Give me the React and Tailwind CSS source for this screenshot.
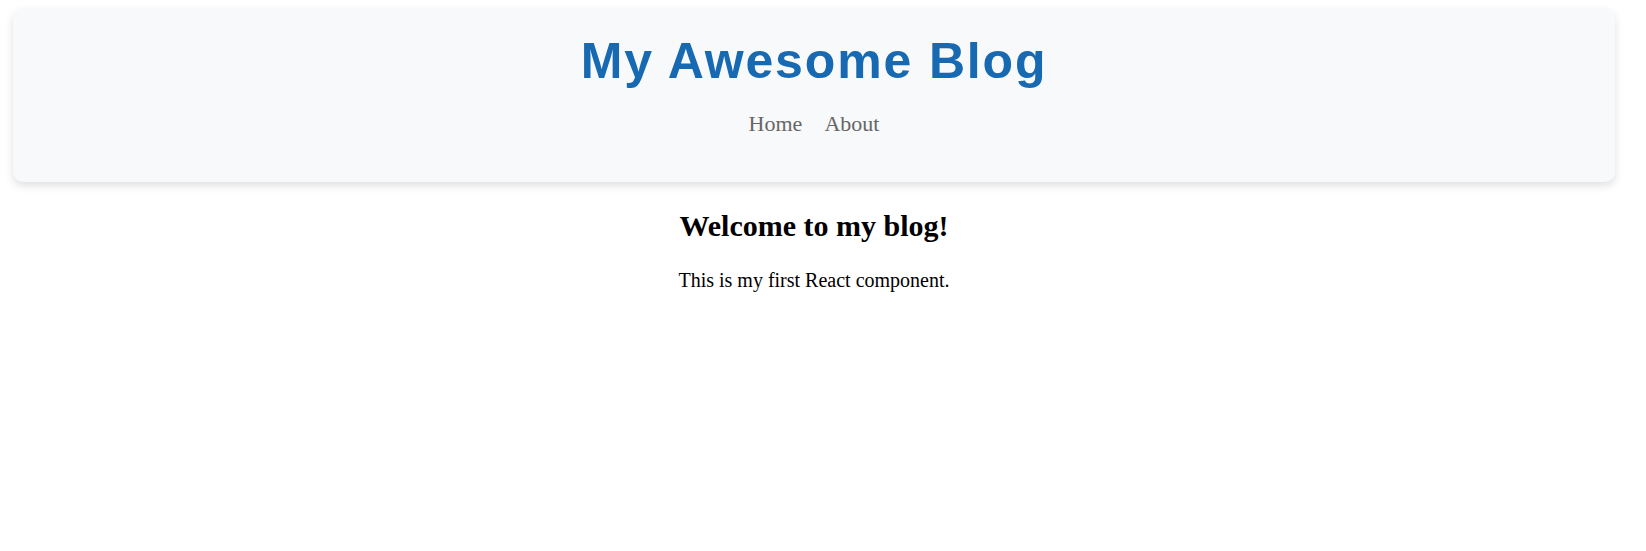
export default function App() {
    return (
        <div className="min-h-screen bg-white pt-2">
            <div className="ml-[13px] mr-[31px]">
                <header className="h-[174px] rounded-[10px] bg-[#f8f9fa] pt-[28px] text-center shadow-[0_4px_8px_rgba(0,0,0,0.12)]">
                    <h1 className="font-['Liberation_Sans',Arial,sans-serif] text-[50px] leading-[50px] font-bold tracking-[1.85px] text-[#1769b2]">
                        My Awesome Blog
                    </h1>
                    <nav className="mt-[26px] flex justify-center gap-[22px] font-['Liberation_Serif','Times_New_Roman',serif] text-[22px] leading-[24px] text-[#666]">
                        <a href="#">Home</a>
                        <a href="#">About</a>
                    </nav>
                </header>

                <main className="mt-[26px] text-center font-['Liberation_Serif','Times_New_Roman',serif] text-black">
                    <h2 className="text-[30px] leading-[36px] font-bold">Welcome to my blog!</h2>
                    <p className="mt-[24px] text-[20px] leading-[24px]">This is my first React component.</p>
                </main>
            </div>
        </div>
    );
}
